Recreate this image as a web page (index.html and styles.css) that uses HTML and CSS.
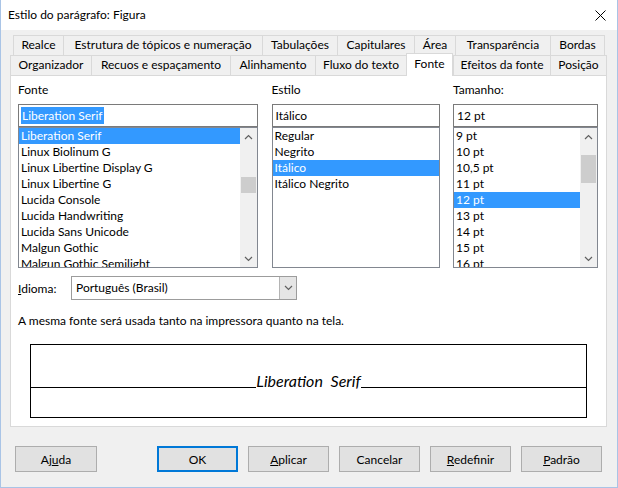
FILE: index.html
```html
<!DOCTYPE html>
<html lang="pt-BR">
<head>
<meta charset="utf-8">
<title>Estilo do parágrafo: Figura</title>
<link rel="stylesheet" href="styles.css">
</head>
<body>
<div class="window">
  <div class="titlebar">
    <span class="title">Estilo do parágrafo: Figura</span>
    <svg class="close" width="11" height="11" viewBox="0 0 11 11"><path d="M0.5 0.5L10.5 10.5M10.5 0.5L0.5 10.5" stroke="#000" stroke-width="1" fill="none"/></svg>
  </div>
  <div class="client">
    <div class="tabs tabs-back">
      <div class="tab">Realce</div>
      <div class="tab">Estrutura de tópicos e numeração</div>
      <div class="tab">Tabulações</div>
      <div class="tab">Capitulares</div>
      <div class="tab">Área</div>
      <div class="tab">Transparência</div>
      <div class="tab">Bordas</div>
    </div>
    <div class="tabs tabs-front">
      <div class="tab">Organizador</div>
      <div class="tab">Recuos e espaçamento</div>
      <div class="tab">Alinhamento</div>
      <div class="tab">Fluxo do texto</div>
      <div class="tab tab-active">Fonte</div>
      <div class="tab">Efeitos da fonte</div>
      <div class="tab">Posição</div>
    </div>
    <div class="panel">
      <div class="fontcols">
        <div class="col col-font">
          <div class="label">Fonte</div>
          <div class="entry"><span class="sel-text">Liberation Serif</span></div>
          <div class="list">
            <div class="items">
              <div class="item sel">Liberation Serif</div>
              <div class="item">Linux Biolinum G</div>
              <div class="item">Linux Libertine Display G</div>
              <div class="item">Linux Libertine G</div>
              <div class="item">Lucida Console</div>
              <div class="item">Lucida Handwriting</div>
              <div class="item">Lucida Sans Unicode</div>
              <div class="item">Malgun Gothic</div>
              <div class="item">Malgun Gothic Semilight</div>
            </div>
            <div class="scrollbar">
              <div class="sb-btn"><svg width="9" height="6" viewBox="0 0 9 6"><path d="M1 5L4.5 1.5L8 5" stroke="#606060" stroke-width="1.2" fill="none"/></svg></div>
              <div class="sb-track"><div class="thumb thumb-font"></div></div>
              <div class="sb-btn"><svg width="9" height="6" viewBox="0 0 9 6"><path d="M1 1L4.5 4.5L8 1" stroke="#606060" stroke-width="1.2" fill="none"/></svg></div>
            </div>
          </div>
        </div>
        <div class="col col-style">
          <div class="label">Estilo</div>
          <div class="entry"><span class="entry-text">Itálico</span></div>
          <div class="list">
            <div class="items">
              <div class="item">Regular</div>
              <div class="item">Negrito</div>
              <div class="item sel">Itálico</div>
              <div class="item">Itálico Negrito</div>
            </div>
          </div>
        </div>
        <div class="col col-size">
          <div class="label">Tamanho:</div>
          <div class="entry"><span class="entry-text">12 pt</span></div>
          <div class="list">
            <div class="items">
              <div class="item">9 pt</div>
              <div class="item">10 pt</div>
              <div class="item">10,5 pt</div>
              <div class="item">11 pt</div>
              <div class="item sel">12 pt</div>
              <div class="item">13 pt</div>
              <div class="item">14 pt</div>
              <div class="item">15 pt</div>
              <div class="item">16 pt</div>
            </div>
            <div class="scrollbar">
              <div class="sb-btn"><svg width="9" height="6" viewBox="0 0 9 6"><path d="M1 5L4.5 1.5L8 5" stroke="#606060" stroke-width="1.2" fill="none"/></svg></div>
              <div class="sb-track"><div class="thumb thumb-size"></div></div>
              <div class="sb-btn"><svg width="9" height="6" viewBox="0 0 9 6"><path d="M1 1L4.5 4.5L8 1" stroke="#606060" stroke-width="1.2" fill="none"/></svg></div>
            </div>
          </div>
        </div>
      </div>
      <div class="lang-row">
        <span class="lang-label"><u>I</u>dioma:</span>
        <div class="combo">
          <span class="combo-text">Português (Brasil)</span>
          <span class="combo-btn"><svg width="9" height="6" viewBox="0 0 9 6"><path d="M1 1L4.5 4.5L8 1" stroke="#606060" stroke-width="1.2" fill="none"/></svg></span>
        </div>
      </div>
      <p class="info">A mesma fonte será usada tanto na impressora quanto na tela.</p>
      <div class="preview">
        <span class="pv-line"></span><span class="pv-text">Liberation Serif</span><span class="pv-line"></span>
      </div>
    </div>
    <div class="buttons">
      <button class="btn btn-help">Aj<u>u</u>da</button>
      <div class="btn-group">
        <button class="btn btn-default">OK</button>
        <button class="btn"><u>A</u>plicar</button>
        <button class="btn">Cancelar</button>
        <button class="btn"><u>R</u>edefinir</button>
        <button class="btn"><u>P</u>adrão</button>
      </div>
    </div>
  </div>
</div>
</body>
</html>
```

FILE: styles.css
```css
* { box-sizing: border-box; }

body {
  margin: 0;
  font-family: Lato, "Noto Sans", sans-serif;
  font-size: 12px;
  color: #000;
  background: #fff;
}

.window {
  width: 618px;
  height: 488px;
  border: 1px solid #a9c4e6;
  border-top: none;
  display: flex;
  flex-direction: column;
  background: #f0f0f0;
}

.titlebar {
  height: 30px;
  flex: none;
  background: #fff;
  display: flex;
  align-items: center;
  justify-content: space-between;
  padding: 0 11px 0 7px;
}

.title { line-height: 16px; }

.close { display: block; }

.client {
  flex: 1;
  padding: 5px 10px 0 9px;
}

.tabs {
  display: grid;
  height: 20px;
}

.tabs-back {
  margin-left: 3px;
  grid-template-columns: 50px 199px 75px 77px 41px 95px 55px;
}

.tabs-front {
  grid-template-columns: 81px 139px 85px 91px 47px 97px 57px;
}

.tab {
  border-top: 1px solid #d9d9d9;
  border-left: 1px solid #d9d9d9;
  background: #f0f0f0;
  text-align: center;
  line-height: 18px;
  white-space: nowrap;
}

.tab:last-child { border-right: 1px solid #d9d9d9; }

.tab-active {
  background: #fff;
  border-right: 1px solid #d9d9d9;
  margin-top: -2px;
  margin-bottom: -1px;
  line-height: 20px;
  z-index: 1;
}

.panel {
  height: 352px;
  background: #fff;
  border: 1px solid #d9d9d9;
  padding: 6px 8px 0 7px;
}

.fontcols {
  display: flex;
  justify-content: space-between;
}

.col-font { width: 240px; }
.col-style { width: 168px; }
.col-size { width: 145px; }

.label {
  line-height: 16px;
  margin-bottom: 6px;
}

.entry {
  height: 23px;
  border: 1px solid #7a7a7a;
  padding: 0 2px;
  display: flex;
  align-items: center;
  background: #fff;
}

.sel-text {
  background: #3399ff;
  color: #fff;
  line-height: 17px;
  padding: 0 1px;
}

.entry-text { line-height: 17px; padding-left: 1px; }

.list {
  height: 141px;
  border: 1px solid #828790;
  display: flex;
  background: #fff;
  overflow: hidden;
}

.items {
  flex: 1;
  overflow: hidden;
}

.item {
  height: 16px;
  line-height: 16px;
  padding-left: 2px;
  white-space: nowrap;
}

.item.sel {
  background: #3399ff;
  color: #fff;
}

.scrollbar {
  width: 17px;
  flex: none;
  background: #f0f0f0;
  display: flex;
  flex-direction: column;
}

.sb-btn {
  height: 17px;
  flex: none;
  display: flex;
  align-items: center;
  justify-content: center;
}

.sb-btn svg { display: block; }

.sb-track { flex: 1; }

.thumb {
  margin-left: 1px;
  margin-right: 1px;
  background: #cdcdcd;
}

.thumb-font { margin-top: 32px; height: 16px; }
.thumb-size { margin-top: 10px; height: 28px; }

.lang-row {
  margin-top: 8px;
  height: 24px;
  display: flex;
  align-items: center;
}

.lang-label { width: 53px; }

.combo {
  width: 226px;
  height: 24px;
  border: 1px solid #9c9c9c;
  display: flex;
  background: #fff;
}

.combo-text {
  flex: 1;
  padding-left: 4px;
  line-height: 22px;
}

.combo-btn {
  width: 17px;
  background: #e5e5e5;
  border-left: 1px solid #b4b4b4;
  display: flex;
  align-items: center;
  justify-content: center;
}

.info {
  margin: 13px 0 0;
  line-height: 16px;
}

.preview {
  margin: 15px 11px 0 12px;
  height: 74px;
  border: 1px solid #000;
  display: flex;
  align-items: flex-start;
}

.pv-line {
  flex: 1;
  height: 43px;
  border-bottom: 1px solid #000;
}

.pv-text {
  font-style: italic;
  font-size: 16px;
  line-height: 20px;
  word-spacing: 4px;
  margin-top: 26px;
}

.buttons {
  margin-top: 19px;
  display: flex;
  padding: 0 5px;
}

.btn {
  width: 81px;
  height: 26px;
  padding: 0;
  background: #e1e1e1;
  border: 1px solid #adadad;
  font: inherit;
  color: #000;
}

.btn-help { width: 82px; }

.btn-default { border: 2px solid #0078d7; }

.btn-group {
  margin-left: auto;
  display: flex;
  gap: 10px;
}
```
